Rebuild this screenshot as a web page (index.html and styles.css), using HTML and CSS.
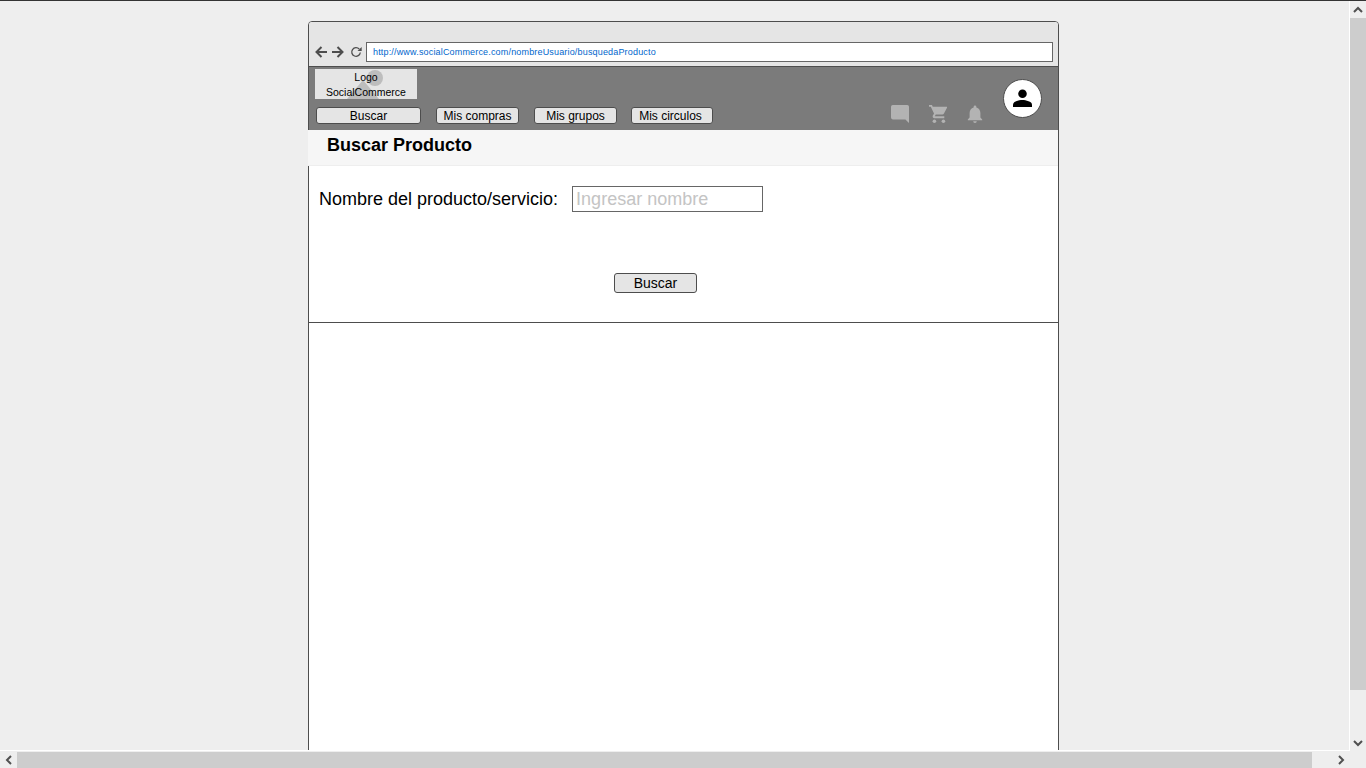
FILE: index.html
```html
<!DOCTYPE html>
<html lang="en">
<head>
  <meta charset="UTF-8">
  <title>Buscar Producto - SocialCommerce</title>
  <link rel="stylesheet" href="styles.css">
</head>
<body>

<div class="window">
  <div class="viewport">
    <div class="mock">
      <div class="browser-bar">
        <svg class="nav-arrow" viewBox="0 0 14 14"><path d="M13 7H3M7.500 2L2.500 7l5 5" fill="none" stroke="#4d4d4d" stroke-width="2"/></svg>
        <svg class="nav-arrow" viewBox="0 0 14 14"><path d="M1 7h10M6.500 2l5 5-5 5" fill="none" stroke="#4d4d4d" stroke-width="2"/></svg>
        <svg class="nav-reload" viewBox="0 0 12 12"><path d="M9.300 3.200A4.300 4.300 0 1 0 10.300 6.500" fill="none" stroke="#4d4d4d" stroke-width="1.300"/><path d="M7.500 5h4.200V1z" fill="#4d4d4d"/></svg>
        <div class="address">http://www.socialCommerce.com/nombreUsuario/busquedaProducto</div>
      </div>

      <header class="site-header">
        <div class="header-left">
          <div class="logo">
            <svg class="logo-pic" viewBox="0 0 102 30"><circle cx="60" cy="9" r="8" fill="#bdbdbd"/><path d="M32 30L48 11l16 19z" fill="#bdbdbd"/></svg>
            <span class="logo-text">Logo</span>
            <span class="logo-text">SocialCommerce</span>
          </div>
          <ul class="nav-links">
            <li class="nav-btn nav-search">Buscar</li>
            <li class="nav-btn nav-compras">Mis compras</li>
            <li class="nav-btn nav-grupos">Mis grupos</li>
            <li class="nav-btn nav-circulos">Mis circulos</li>
          </ul>
        </div>
        <div class="header-icons">
          <svg class="icon icon-chat" viewBox="0 0 20 20"><path d="M2 0h16a2 2 0 0 1 2 2v18l-4-4H2a2 2 0 0 1-2-2V2a2 2 0 0 1 2-2z" fill="#b3b3b3"/></svg>
          <svg class="icon icon-cart" viewBox="0 0 20 20"><path d="M0 0h3.300l.9 2H19.500c.5 0 .7.500.5 1l-3.400 6.500c-.3.600-1 1-1.700 1H7.500l-.9 1.700c-.1.200 0 .4.300.4H17v2H6c-1.500 0-2.400-1.500-1.700-2.800l1.300-2.400L2 2H0z" fill="#b3b3b3"/><circle cx="6" cy="18" r="2" fill="#b3b3b3"/><circle cx="16" cy="18" r="2" fill="#b3b3b3"/></svg>
          <svg class="icon icon-bell" viewBox="0 0 16 20"><path d="M8 20a2 2 0 0 0 2-2H6a2 2 0 0 0 2 2zM14 14V9c0-3-1.600-5.500-4.500-6.200V2a1.500 1.500 0 0 0-3 0v.8C3.600 3.500 2 6 2 9v5l-2 2v1h16v-1z" fill="#b3b3b3"/></svg>
          <div class="avatar">
            <svg viewBox="0 0 20 20"><circle cx="10" cy="5" r="4.500"/><path d="M0 19v-2.500C0 13 6.500 11.500 10 11.500s10 1.500 10 5V19z"/></svg>
          </div>
        </div>
      </header>

      <div class="page-title"><h1>Buscar Producto</h1></div>

      <section class="search-form">
        <div class="field">
          <label for="nombre">Nombre del producto/servicio:</label>
          <input id="nombre" type="text" placeholder="Ingresar nombre">
        </div>
        <button class="search-btn">Buscar</button>
      </section>

      <div class="results"></div>
    </div>
  </div>

  <div class="vscroll">
    <svg class="arrow" viewBox="0 0 10 7"><path d="M1 6l4-4 4 4" fill="none" stroke="#505050" stroke-width="2"/></svg>
    <div class="vthumb"></div>
    <svg class="arrow" viewBox="0 0 10 7"><path d="M1 1l4 4 4-4" fill="none" stroke="#505050" stroke-width="2"/></svg>
  </div>
</div>

<div class="hscroll">
  <svg class="arrow-h" viewBox="0 0 7 10"><path d="M6 1L2 5l4 4" fill="none" stroke="#505050" stroke-width="2"/></svg>
  <div class="hthumb"></div>
  <svg class="arrow-h" viewBox="0 0 7 10"><path d="M1 1l4 4-4 4" fill="none" stroke="#505050" stroke-width="2"/></svg>
</div>

</body>
</html>
```

FILE: styles.css
```css
html, body {
  height: 100%;
}

body {
  margin: 0;
  display: flex;
  flex-direction: column;
  overflow: hidden;
  background: #eeeeee;
  border-top: 1px solid #333333;
  box-sizing: border-box;
  font-family: "Liberation Sans", Arial, sans-serif;
  color: #000000;
}

.window {
  flex: 1;
  display: flex;
  min-height: 0;
}

.viewport {
  flex: 1;
  min-width: 0;
  overflow: hidden;
  padding: 20px 0 0 308px;
  border-right: 1px solid #ffffff;
  border-bottom: 1px solid #ffffff;
}

/* Wireframe frame */
.mock {
  width: 749px;
  height: 760px;
  background: #ffffff;
  border: 1px solid #4d4d4d;
  border-radius: 4px 4px 0 0;
}

.browser-bar {
  height: 45px;
  box-sizing: border-box;
  padding: 19px 5px 4px 5px;
  display: flex;
  align-items: center;
  background: #e5e5e5;
  border-bottom: 1px solid #4d4d4d;
  border-radius: 3px 3px 0 0;
}

.nav-arrow {
  width: 14px;
  height: 14px;
  margin-right: 3px;
  flex: none;
}

.nav-reload {
  width: 12px;
  height: 12px;
  margin: 0 4px 0 2px;
  flex: none;
}

.address {
  flex: 1;
  height: 20px;
  box-sizing: border-box;
  border: 1px solid #666666;
  background: #ffffff;
  padding-left: 6px;
  font-size: 9px;
  line-height: 18px;
  letter-spacing: 0.17px;
  color: #0066cc;
}

.site-header {
  height: 63px;
  display: flex;
  justify-content: space-between;
  background: #7b7b7b;
}

.header-left {
  padding: 2px 0 0 6px;
}

.logo {
  position: relative;
  width: 102px;
  height: 30px;
  box-sizing: border-box;
  padding-top: 2px;
  background: #e5e5e5;
  display: flex;
  flex-direction: column;
  align-items: center;
  justify-content: center;
  overflow: hidden;
}

.logo-pic {
  position: absolute;
  left: 0;
  top: 0;
  width: 102px;
  height: 30px;
}

.logo-text {
  position: relative;
  font-size: 10.500px;
  line-height: 15px;
}

.nav-links {
  list-style: none;
  display: flex;
  margin: 8px 0 0 1px;
  padding: 0;
}

.nav-btn {
  height: 17px;
  box-sizing: border-box;
  border: 1px solid #4d4d4d;
  border-radius: 3px;
  background: #e5e5e5;
  font-size: 12px;
  line-height: 16px;
  text-align: center;
}

.nav-search { width: 105px; margin-right: 15px; }
.nav-compras { width: 83px; margin-right: 15px; }
.nav-grupos { width: 83px; margin-right: 14px; }
.nav-circulos { width: 82px; padding-right: 3px; }

.header-icons {
  display: flex;
  align-items: flex-start;
  padding: 12px 16px 0 0;
}

.icon {
  display: block;
  margin: 26px 20px 0 0;
  height: 18px;
}

.icon-chat { width: 18px; }
.icon-cart { width: 18px; }
.icon-bell { width: 16px; }

.avatar {
  width: 39px;
  height: 39px;
  box-sizing: border-box;
  border: 1px solid #4d4d4d;
  border-radius: 50%;
  background: #ffffff;
  display: flex;
  align-items: center;
  justify-content: center;
}

.avatar svg {
  width: 19px;
  height: 19px;
}

.page-title {
  height: 36px;
  box-sizing: border-box;
  margin-left: -1px;
  background: #f6f6f6;
  border-bottom: 1px solid #eeeeee;
  padding-left: 19px;
}

.page-title h1 {
  margin: 0;
  font-size: 18px;
  line-height: 31px;
}

.search-form {
  height: 157px;
  box-sizing: border-box;
  border-bottom: 1px solid #4d4d4d;
  padding: 20px 0 0 10px;
}

.field {
  display: flex;
  align-items: center;
}

.field label {
  font-size: 18px;
  margin-right: 14px;
}

.field input {
  width: 191px;
  height: 26px;
  box-sizing: border-box;
  border: 1px solid #666666;
  outline: none;
  padding: 0 3px;
  font-family: inherit;
  font-size: 18px;
}

.field input::placeholder {
  color: #c4c4c4;
  opacity: 1;
}

.search-btn {
  display: block;
  width: 83px;
  height: 20px;
  margin: 61px 0 0 295px;
  box-sizing: border-box;
  border: 1px solid #4d4d4d;
  border-radius: 3px;
  background: #e5e5e5;
  padding: 0;
  font-family: inherit;
  font-size: 14px;
  line-height: 18px;
  color: #000000;
}

/* Browser scrollbars */
.vscroll {
  width: 16px;
  display: flex;
  flex-direction: column;
  align-items: center;
}

.arrow {
  width: 10px;
  height: 7px;
  flex: none;
  margin: 5px 0;
}

.arrow:last-child {
  margin: 6px 0 4px;
}

.vthumb {
  flex: 1;
  align-self: stretch;
  background: #cdcdcd;
  margin-bottom: 44px;
}

.hscroll {
  height: 17px;
  flex: none;
  display: flex;
  align-items: center;
}

.arrow-h {
  width: 7px;
  height: 10px;
  flex: none;
  margin: 0 5px;
}

.hthumb {
  width: 1295px;
  height: 16px;
  background: #cdcdcd;
  margin-right: 21px;
}
```
